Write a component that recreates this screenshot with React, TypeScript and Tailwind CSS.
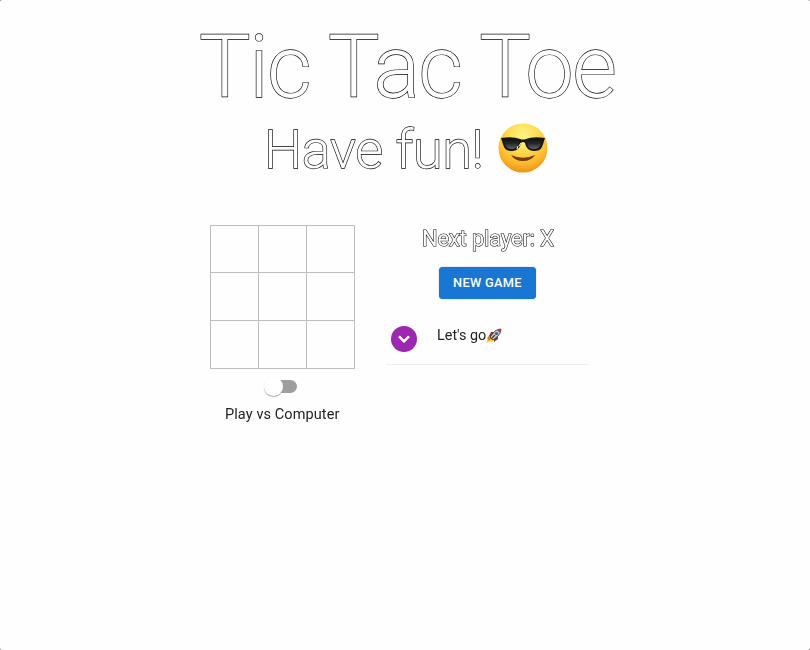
import type { ReactNode } from "react";

function Outlined({ children, className }: { children: ReactNode; className: string }) {
  return <span className={"whitespace-nowrap text-[#fefefe] [paint-order:stroke_fill] will-change-transform " + className}>{children}</span>;
}

function Sunglasses() {
  return (
    <svg className="h-[52px] w-[52px]" viewBox="0 0 52 52" aria-label="Smiling face with sunglasses">
      <defs>
        <radialGradient id="face" cx="50%" cy="25%" r="78%">
          <stop offset="0" stopColor="#fff58a" />
          <stop offset=".4" stopColor="#ffdc50" />
          <stop offset=".75" stopColor="#fbb52b" />
          <stop offset="1" stopColor="#e98b14" />
        </radialGradient>
        <linearGradient id="lens" x1="0" y1="0" x2="0" y2="1">
          <stop offset="0" stopColor="#111" />
          <stop offset=".45" stopColor="#25282a" />
          <stop offset="1" stopColor="#626568" />
        </linearGradient>
      </defs>
      <circle cx="26" cy="26" r="24.5" fill="url(#face)" />
      <path d="M4 16 Q16 14 23 17 Q26 18 29 17 Q36 14 48 16 L47 19 C45 26 44 29 37 29 C31 29 29 25 28 21 Q26 19 24 21 C23 25 21 29 15 29 C8 29 7 26 5 19Z" fill="#171717" />
      <path d="M7 18 Q15 16 22 19 C22 24 19 27 15 27 C9 27 8 23 7 18Z M30 19 Q37 16 45 18 C44 23 43 27 37 27 C32 27 30 24 30 19Z" fill="url(#lens)" />
      <path d="M14 33 Q26 38.5 38 33 Q34 39 26 39 Q18 39 14 33Z" fill="#783b05" />
      <path d="M22 24 L24 21 M20 27 L21 24" stroke="white" strokeWidth="1" />
    </svg>
  );
}

function Rocket() {
  return (
    <svg className="h-4 w-4" viewBox="0 0 16 16" aria-label="Rocket">
      <path d="M0 15 L3 8 L5 9 L8 12 L6 14 L4 13Z" fill="#ffc62b" />
      <path d="M1 10 L4 7 L5 10 L3 13Z" fill="#e97720" />
      <path d="M3 8 L5 4 L9 4 L5 9Z M8 11 L12 7 L12 11 L8 14Z" fill="#923329" />
      <path d="M4 9 L9 3 Q12 1 15 1 Q15 5 12 8 L7 12Z" fill="#c6ced6" stroke="#303238" strokeWidth=".8" />
      <path d="M11 2 Q13 1 15 1 Q15 3 14 5Z" fill="#b3402c" />
      <circle cx="10.5" cy="5.5" r="1.6" fill="#366483" />
      <path d="M5 11 L9 7" stroke="#393b40" strokeWidth="1.3" />
    </svg>
  );
}

function Board() {
  return (
    <div className="grid h-[144px] w-[145px] grid-cols-3 grid-rows-[47px_48px_48px] border-t border-l border-[#bdbdbd]">
      {Array.from({ length: 9 }, (_, i) => (
        <button key={i} aria-label={`Square ${i + 1}`} className="border-r border-b border-[#bdbdbd]" />
      ))}
    </div>
  );
}

export default function App() {
  return (
    <div className="h-[650px] w-[810px] bg-[#777]">
      <main className="h-[650px] w-[810px] overflow-hidden rounded-[2px] bg-[#fefefe] font-[Roboto,sans-serif]">
        <header className="flex flex-col items-center pl-[4px] pt-[17px]">
          <h1 className="flex h-[101px] items-center">
            <Outlined className="text-[86.5px] leading-[102px] font-light tracking-[-1.5px] [-webkit-text-stroke:1.3px_#000]">Tic Tac Toe</Outlined>
          </h1>
          <h2 className="flex h-[64px] items-center gap-[14px] pr-[1px]">
            <Outlined className="text-[54px] leading-[64px] font-light tracking-[-0.4px] [-webkit-text-stroke:1.3px_#000]">Have fun!</Outlined>
            <span className="-mt-[4px]"><Sunglasses /></span>
          </h2>
        </header>
        <div className="flex gap-[31px] pl-[210px] pt-[43px]">
          <section className="flex w-[145px] flex-col items-center">
            <Board />
            <button role="switch" aria-checked="false" aria-label="Play vs Computer" className="mt-[7px] mr-[2px] flex h-[20px] w-[34px] items-center rounded-full">
              <span className="flex h-[13px] w-[32px] items-center rounded-full bg-[#9e9e9e]">
                <span className="-ml-px h-[19px] w-[19px] shrink-0 rounded-full bg-white shadow-[0_1px_1px_#aaa]" />
              </span>
            </button>
            <span className="mt-[8px] whitespace-nowrap text-[14.5px] leading-[22px] tracking-[0.1px] text-[#222] will-change-transform">Play vs Computer</span>
          </section>
          <section className="flex w-[203px] flex-col items-center">
            <Outlined className="text-[21.8px] leading-[27px] [-webkit-text-stroke:1.1px_#000] tracking-[-0.1px]">Next player: X</Outlined>
            <button className="mt-[15px] h-[32px] w-[97px] rounded-[4px] bg-[#1976d2] text-[12.8px] font-medium tracking-[0.3px] text-white shadow-[0_0_1px_#555]">NEW GAME</button>
            <div className="mt-[20px] flex h-[46px] w-full border-b border-[#eeeeee] pl-[5px]">
              <span className="mt-[7px] flex h-[26px] w-[26px] items-center justify-center rounded-full bg-[#9c27b0]">
                <svg className="h-[22px] w-[22px]" viewBox="0 0 24 24" fill="white" stroke="white" strokeWidth="0.8">
                  <path d="M7.41 8.59 12 13.17l4.59-4.58L18 10l-6 6-6-6z" />
                </svg>
              </span>
              <div className="mt-[6px] ml-[20px] flex h-[22px] items-center text-[14.4px] leading-[22px] text-[#222] will-change-transform">
                <span>Let's go</span>
                <Rocket />
              </div>
            </div>
          </section>
        </div>
      </main>
    </div>
  );
}
